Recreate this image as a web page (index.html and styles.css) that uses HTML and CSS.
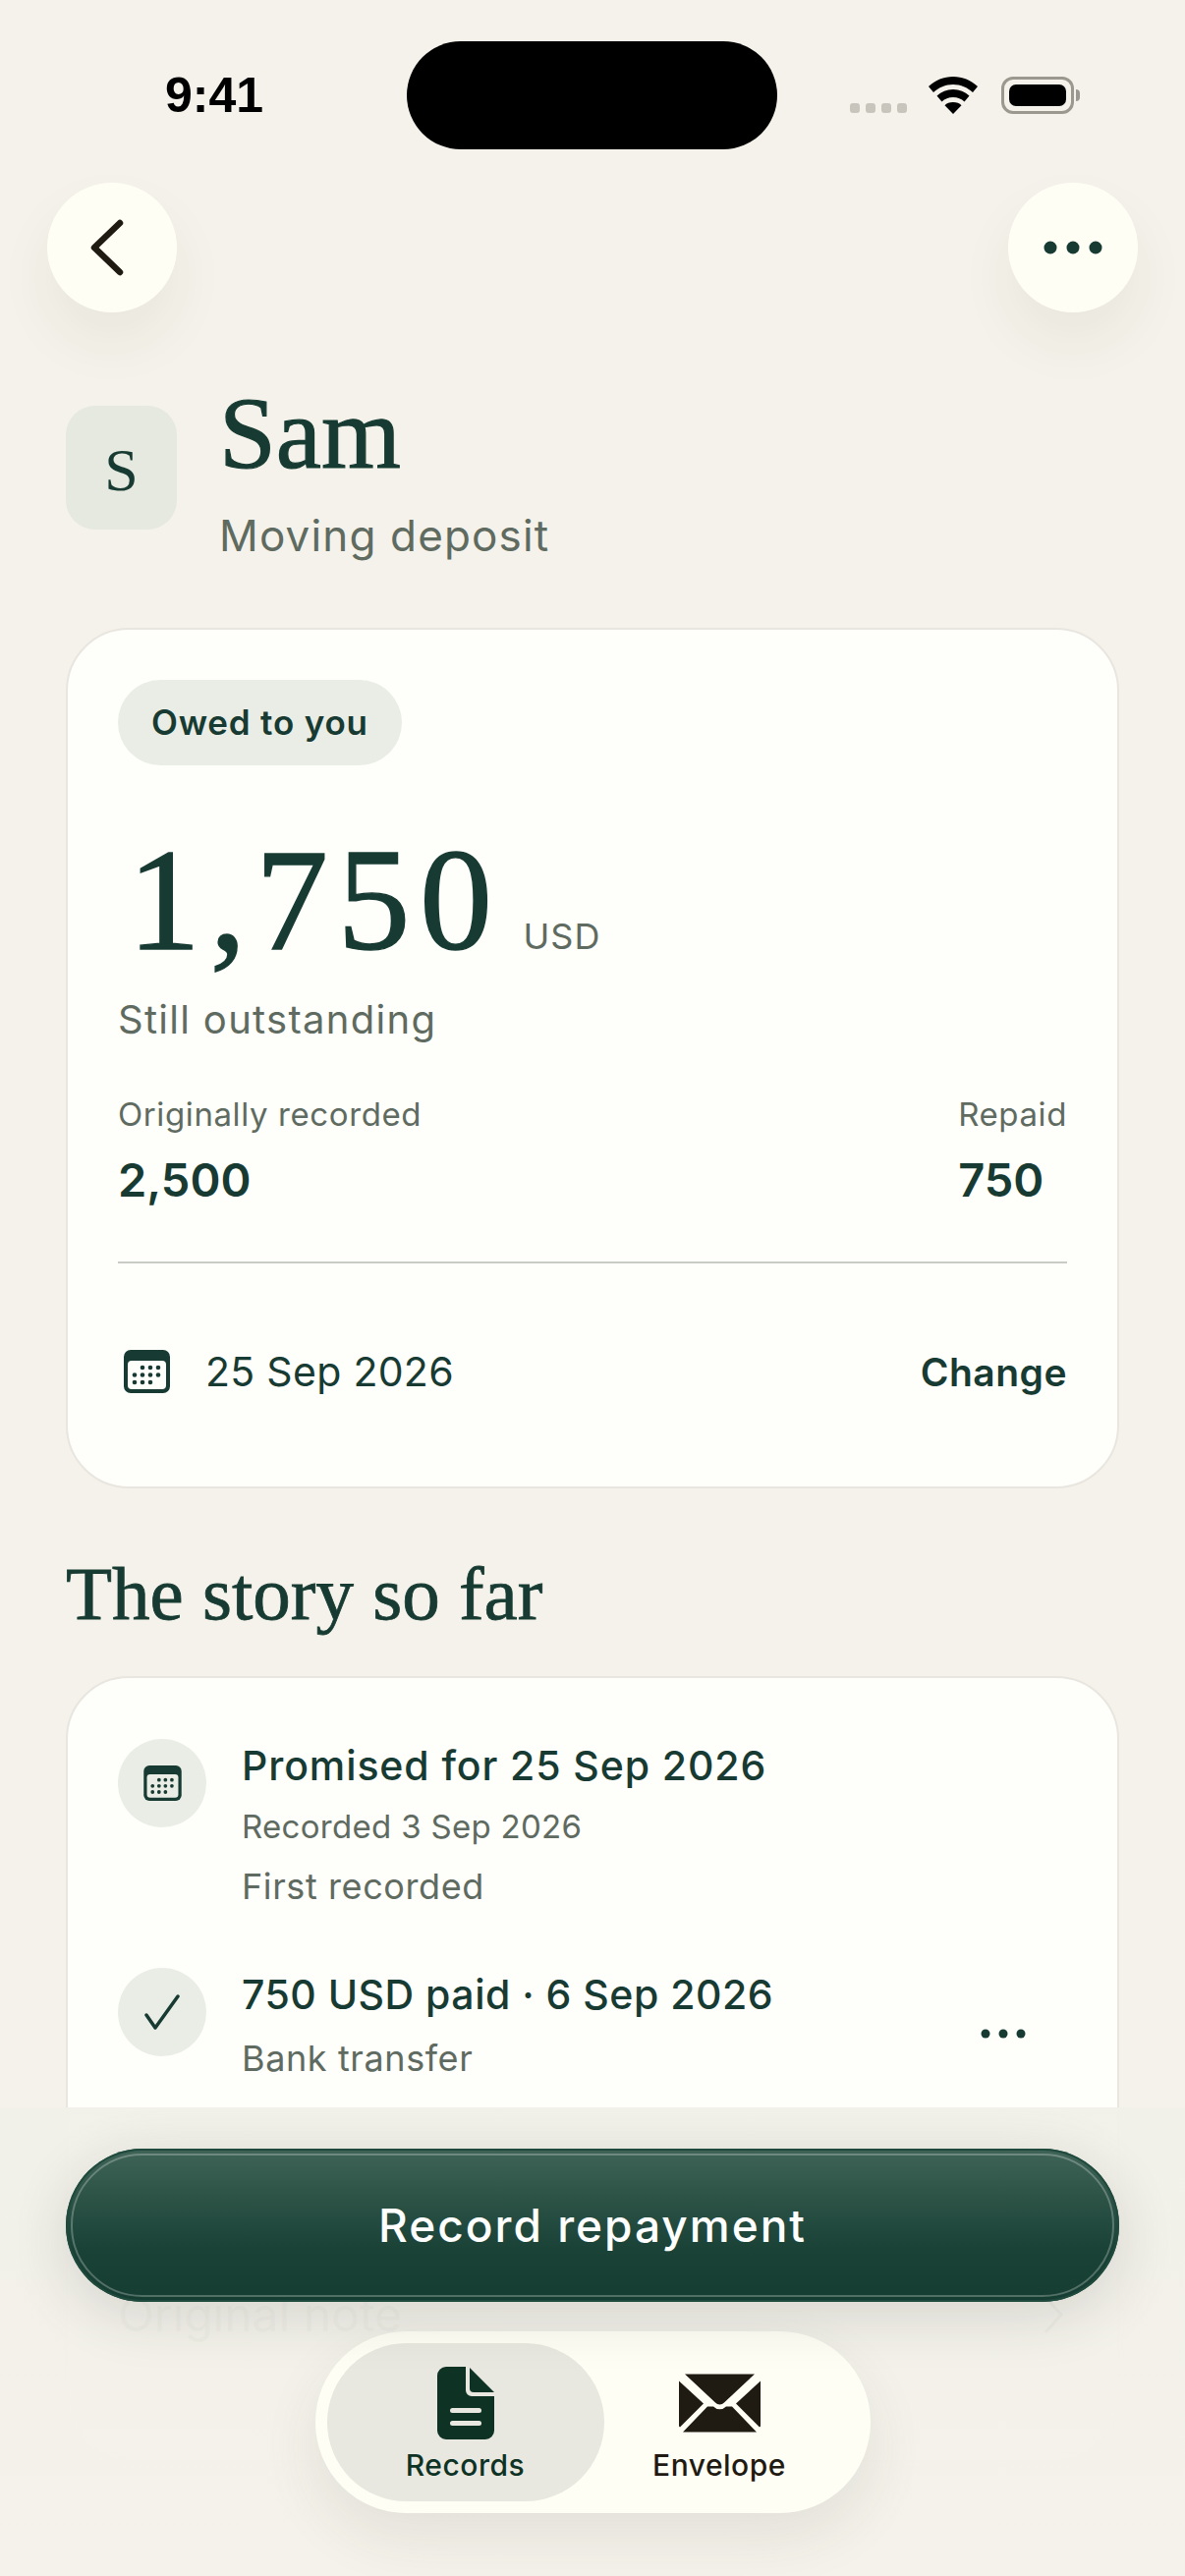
FILE: index.html
```html
<!DOCTYPE html>
<html lang="en">
<head>
  <meta charset="UTF-8">
  <meta name="viewport" content="width=device-width, initial-scale=1.0">
  <title>Sam - Moving deposit</title>
  <link rel="stylesheet" href="styles.css">
</head>
<body>
  <svg class="defs" width="0" height="0">
    <symbol id="calendar" viewBox="0 0 47 44">
      <rect width="47" height="44" rx="7" fill="#173b32"/>
      <rect x="4" y="11" width="39" height="29" rx="4" fill="var(--cal-bg)"/>
      <g fill="#173b32">
        <circle cx="19" cy="18" r="2.3"/><circle cx="27" cy="18" r="2.3"/><circle cx="35" cy="18" r="2.3"/>
        <circle cx="11" cy="25.5" r="2.3"/><circle cx="19" cy="25.5" r="2.3"/><circle cx="27" cy="25.5" r="2.3"/><circle cx="35" cy="25.5" r="2.3"/>
        <circle cx="11" cy="33" r="2.3"/><circle cx="19" cy="33" r="2.3"/><circle cx="27" cy="33" r="2.3"/>
      </g>
    </symbol>
  </svg>

  <div class="screen">
    <div class="status-bar">
      <span class="time">9:41</span>
      <div class="island"></div>
      <div class="status-icons">
        <div class="signal"><i></i><i></i><i></i><i></i></div>
        <svg class="wifi" viewBox="0 0 50 38" width="50" height="38">
          <path d="M25 0C15.500 0 7 3.600 0 10l5 6c5.500-5 12-8 20-8s14.500 3 20 8l5-6C43 3.600 34.500 0 25 0z" fill="#000"/>
          <path d="M25 13c-6.500 0-12 2.300-16.500 6.500l5 6c3-2.800 7-4.500 11.500-4.500s8.500 1.700 11.500 4.500l5-6C37 15.300 31.500 13 25 13z" fill="#000"/>
          <path d="M25 26c-3.600 0-6.500 1.200-8.500 3.200L25 38l8.500-8.800C31.500 27.200 28.600 26 25 26z" fill="#000"/>
        </svg>
        <div class="battery"><div class="battery-fill"></div></div>
        <div class="battery-nub"></div>
      </div>
    </div>

    <div class="top-bar">
      <button class="round-btn">
        <svg class="back-icon" viewBox="0 0 36 58" width="36" height="58"><path d="M31 4 5 29l26 25" fill="none" stroke="#1f1b12" stroke-width="6.500" stroke-linecap="round" stroke-linejoin="round"/></svg>
      </button>
      <button class="round-btn">
        <svg viewBox="0 0 60 14" width="60" height="14"><circle cx="7" cy="7" r="6.500" fill="#173b32"/><circle cx="30" cy="7" r="6.500" fill="#173b32"/><circle cx="53" cy="7" r="6.500" fill="#173b32"/></svg>
      </button>
    </div>

    <div class="person">
      <div class="avatar">S</div>
      <div class="person-text">
        <h1>Sam</h1>
        <p>Moving deposit</p>
      </div>
    </div>

    <section class="card summary">
      <span class="chip">Owed to you</span>
      <div class="amount-row">
        <span class="amount">1,750</span>
        <span class="currency">USD</span>
      </div>
      <p class="outstanding">Still outstanding</p>
      <div class="totals">
        <div>
          <div class="total-label">Originally recorded</div>
          <div class="total-value">2,500</div>
        </div>
        <div>
          <div class="total-label">Repaid</div>
          <div class="total-value">750</div>
        </div>
      </div>
      <div class="date-row">
        <svg class="date-icon"><use href="#calendar"/></svg>
        <span class="date-text">25 Sep 2026</span>
        <a class="change">Change</a>
      </div>
    </section>

    <h2>The story so far</h2>

    <section class="card story">
      <div class="story-row first">
        <div class="story-icon">
          <svg class="story-cal"><use href="#calendar"/></svg>
        </div>
        <div class="story-text">
          <div class="story-title">Promised for 25 Sep 2026</div>
          <div class="story-date">Recorded 3 Sep 2026</div>
          <div class="story-note">First recorded</div>
        </div>
      </div>
      <div class="story-row">
        <div class="story-icon">
          <svg viewBox="0 0 36 36" width="36" height="36"><path d="M2 21l9 13L34 2" fill="none" stroke="#173b32" stroke-width="3.500" stroke-linecap="round" stroke-linejoin="round"/></svg>
        </div>
        <div class="story-text">
          <div class="story-title tight">750 USD paid · 6 Sep 2026</div>
          <div class="story-note">Bank transfer</div>
        </div>
        <svg class="row-more" viewBox="0 0 46 10" width="46" height="10"><circle cx="5" cy="5" r="4.500" fill="#173b32"/><circle cx="23" cy="5" r="4.500" fill="#173b32"/><circle cx="41" cy="5" r="4.500" fill="#173b32"/></svg>
      </div>
      <div class="note-row">
        <span class="note-label">Original note</span>
        <svg viewBox="0 0 20 40" width="20" height="40"><path d="M2 2l16 18L2 38" fill="none" stroke="#173b32" stroke-width="3"/></svg>
      </div>
    </section>

    <div class="dock">
      <button class="primary">Record repayment</button>
      <nav class="tabs">
        <a class="tab active">
          <svg viewBox="0 0 58 74" width="58" height="74">
            <path d="M9 0h20v24a6 6 0 0 0 6 6h23v35a9 9 0 0 1-9 9H9a9 9 0 0 1-9-9V9a9 9 0 0 1 9-9z" fill="#0e3325"/>
            <path d="M33 1l25 25H37a4 4 0 0 1-4-4z" fill="#0e3325"/>
            <rect x="13" y="42" width="32" height="5" rx="2.500" fill="#e9e8e0"/>
            <rect x="13" y="55" width="32" height="5" rx="2.500" fill="#e9e8e0"/>
          </svg>
          <span>Records</span>
        </a>
        <a class="tab">
          <svg viewBox="0 0 83 59" width="83" height="74">
            <path d="M6 0h71L46 29a6 6 0 0 1-9 0z" fill="#1f1b12"/>
            <path d="M83 7v46l-1 1-24-24z" fill="#1f1b12"/>
            <path d="M0 7v46l1 1 24-24z" fill="#1f1b12"/>
            <path d="M29 33l6 0a9 9 0 0 0 13 0l6 0 25 26H4z" fill="#1f1b12"/>
          </svg>
          <span>Envelope</span>
        </a>
      </nav>
    </div>
  </div>
</body>
</html>
```

FILE: styles.css
```css
* {
  box-sizing: border-box;
}

html, body {
  margin: 0;
  padding: 0;
}

body {
  font-family: "Inter", "Noto Sans", sans-serif;
  background-color: #f4f2ea;
  color: #173b32;
}

.defs {
  position: absolute;
}

.screen {
  position: relative;
  width: 1206px;
  height: 2622px;
  overflow: hidden;
  --cal-bg: #fefefb;
}

/* status bar */
.status-bar {
  display: grid;
  grid-template-columns: 414px 377px 1fr;
  padding-top: 42px;
  height: 152px;
}

.time {
  font-family: "Liberation Sans", Arial, sans-serif;
  font-weight: 700;
  font-size: 50px;
  line-height: 110px;
  padding-left: 168px;
  color: #000;
}

.island {
  background-color: #000;
  border-radius: 55px;
  height: 110px;
}

.status-icons {
  display: flex;
  align-items: center;
  padding: 36px 0 36px 74px;
  height: 110px;
}

.signal {
  display: flex;
  gap: 6px;
  margin-top: 26px;
  margin-right: 22px;
}

.signal i {
  width: 10px;
  height: 10px;
  border-radius: 3px;
  background-color: #c8c5bd;
}

.battery {
  width: 74px;
  height: 38px;
  margin-left: 24px;
  padding: 5px;
  border: 3px solid #9b9890;
  border-radius: 12px;
}

.battery-fill {
  height: 100%;
  background-color: #000;
  border-radius: 7px;
}

.battery-nub {
  width: 4px;
  height: 12px;
  margin-left: 2px;
  background-color: #9b9890;
  border-radius: 0 4px 4px 0;
}

/* top buttons */
.top-bar {
  display: flex;
  justify-content: space-between;
  margin-top: 34px;
  padding: 0 48px;
}

.round-btn {
  display: flex;
  align-items: center;
  justify-content: center;
  width: 132px;
  height: 132px;
  padding: 0;
  border: none;
  border-radius: 50%;
  background-color: #fffef5;
  box-shadow: 0 30px 60px rgba(60, 55, 40, 0.06);
}

.back-icon {
  margin-right: 11px;
}

/* person header */
.person {
  display: flex;
  align-items: flex-start;
  gap: 43px;
  margin-top: 68px;
  padding: 0 67px;
}

.avatar {
  display: flex;
  align-items: center;
  justify-content: center;
  width: 113px;
  height: 126px;
  margin-top: 27px;
  background-color: #e6e9df;
  border-radius: 30px;
  font-family: "Liberation Serif", serif;
  font-size: 62px;
  padding-top: 4px;
}

.person-text h1 {
  margin: 0;
  font-family: "Liberation Serif", serif;
  font-weight: 400;
  font-size: 104px;
  line-height: 110px;
  -webkit-text-stroke: 1.2px #173b32;
}

.person-text p {
  margin: 23px 0 0;
  font-size: 44px;
  line-height: 52px;
  letter-spacing: 1.150px;
  color: #5f6b60;
}

/* cards */
.card {
  margin: 0 67px;
  background-color: #fefefb;
  border: 2px solid #e8e6de;
  border-radius: 64px;
}

.summary {
  margin-top: 68px;
  height: 876px;
  padding: 51px 51px 0;
}

.chip {
  display: inline-block;
  height: 87px;
  padding: 0 34px;
  background-color: #eaede5;
  border-radius: 44px;
  font-weight: 600;
  font-size: 35px;
  line-height: 87px;
  letter-spacing: 0.800px;
}

.amount-row {
  display: flex;
  align-items: baseline;
  gap: 22px;
  margin-top: 62px;
  padding-left: 10px;
  height: 150px;
}

.amount {
  font-family: "Liberation Serif", serif;
  font-size: 148px;
  line-height: 150px;
  letter-spacing: 9.500px;
  -webkit-text-stroke: 1.4px #173b32;
}

.currency {
  font-size: 36px;
  letter-spacing: 1px;
  color: #5f6b60;
}

.outstanding {
  margin: 23px 0 0;
  font-size: 40px;
  line-height: 48px;
  letter-spacing: 1.300px;
  color: #5f6b60;
}

.totals {
  display: flex;
  justify-content: space-between;
  margin-top: 51px;
  padding-bottom: 55px;
  border-bottom: 2px solid #c9cbc5;
}

.total-label {
  font-size: 33px;
  line-height: 42px;
  letter-spacing: 0.600px;
  color: #5f6b60;
}

.total-value {
  margin-top: 18px;
  font-weight: 600;
  font-size: 47px;
  line-height: 56px;
}

.date-row {
  display: flex;
  align-items: center;
  margin-top: 85px;
  padding-left: 6px;
}

.date-icon {
  width: 47px;
  height: 44px;
}

.date-text {
  flex: 1;
  margin-left: 36px;
  font-size: 41px;
  letter-spacing: 0.300px;
}

.change {
  font-size: 39px;
  font-weight: 600;
  letter-spacing: 0.500px;
}

h2 {
  margin: 68px 67px 0;
  font-family: "Liberation Serif", serif;
  font-weight: 400;
  font-size: 77px;
  line-height: 78px;
  -webkit-text-stroke: 0.8px #173b32;
}

/* story */
.story {
  margin-top: 45px;
  padding: 62px 51px 0;
  height: 800px;
  --cal-bg: #eaede5;
}

.story-row {
  display: flex;
  gap: 36px;
  margin-top: 61px;
  position: relative;
}

.story-row.first {
  margin-top: 0;
}

.story-icon {
  display: flex;
  align-items: center;
  justify-content: center;
  flex: none;
  width: 90px;
  height: 90px;
  background-color: #eaede5;
  border-radius: 50%;
}

.story-cal {
  width: 39px;
  height: 36px;
}

.story-text {
  padding-top: 2px;
}

.story-title {
  font-weight: 500;
  font-size: 41px;
  line-height: 50px;
  letter-spacing: 0.900px;
}

.story-title.tight {
  letter-spacing: 0.500px;
}

.story-date {
  margin-top: 16px;
  font-size: 33px;
  line-height: 42px;
  letter-spacing: 0.300px;
  color: #5f6b60;
}

.story-note {
  margin-top: 18px;
  font-size: 36px;
  line-height: 44px;
  letter-spacing: 0.600px;
  color: #5f6b60;
}

.row-more {
  position: absolute;
  right: 42px;
  top: 62px;
}

.note-row {
  display: flex;
  align-items: center;
  justify-content: space-between;
  margin-top: 213px;
  padding-right: 4px;
}

.note-label {
  font-size: 48px;
  line-height: 52px;
  color: #5f6b60;
}

/* bottom dock */
.dock {
  position: absolute;
  left: 0;
  right: 0;
  top: 2145px;
  bottom: 0;
  display: flex;
  flex-direction: column;
  align-items: center;
  padding-top: 42px;
  background: linear-gradient(to bottom, rgba(241, 240, 233, 0.97), rgba(244, 242, 234, 0.97));
}

.primary {
  position: relative;
  width: 1072px;
  height: 156px;
  border: none;
  border-radius: 78px;
  background: linear-gradient(to bottom, #3f6357, #1a4236 65%, #163d31);
  box-shadow: inset 0 0 0 2px #1f4a3d, 0 14px 60px rgba(40, 45, 35, 0.14);
  color: #ffffff;
  font-family: "Inter", sans-serif;
  font-weight: 500;
  font-size: 46px;
  letter-spacing: 2px;
}

.primary::after {
  content: "";
  position: absolute;
  top: 5px;
  right: 5px;
  bottom: 5px;
  left: 5px;
  border: 2px solid rgba(255, 255, 255, 0.26);
  border-radius: 73px;
}

.tabs {
  display: flex;
  align-items: stretch;
  width: 565px;
  height: 185px;
  margin-top: 30px;
  padding: 12px;
  background-color: #fffef5;
  border-radius: 93px;
  box-shadow: 0 24px 60px rgba(60, 55, 40, 0.09);
}

.tab {
  display: flex;
  flex-direction: column;
  align-items: center;
  justify-content: flex-end;
  flex: 1;
  gap: 8px;
  padding-right: 24px;
  padding-bottom: 19px;
  font-weight: 500;
  font-size: 30px;
  line-height: 36px;
  letter-spacing: 0.500px;
  color: #1f1b12;
}

.tab.active {
  flex: none;
  width: 282px;
  padding-right: 0;
  background-color: #e9e8e0;
  border-radius: 81px;
  color: #0e3325;
}
```
